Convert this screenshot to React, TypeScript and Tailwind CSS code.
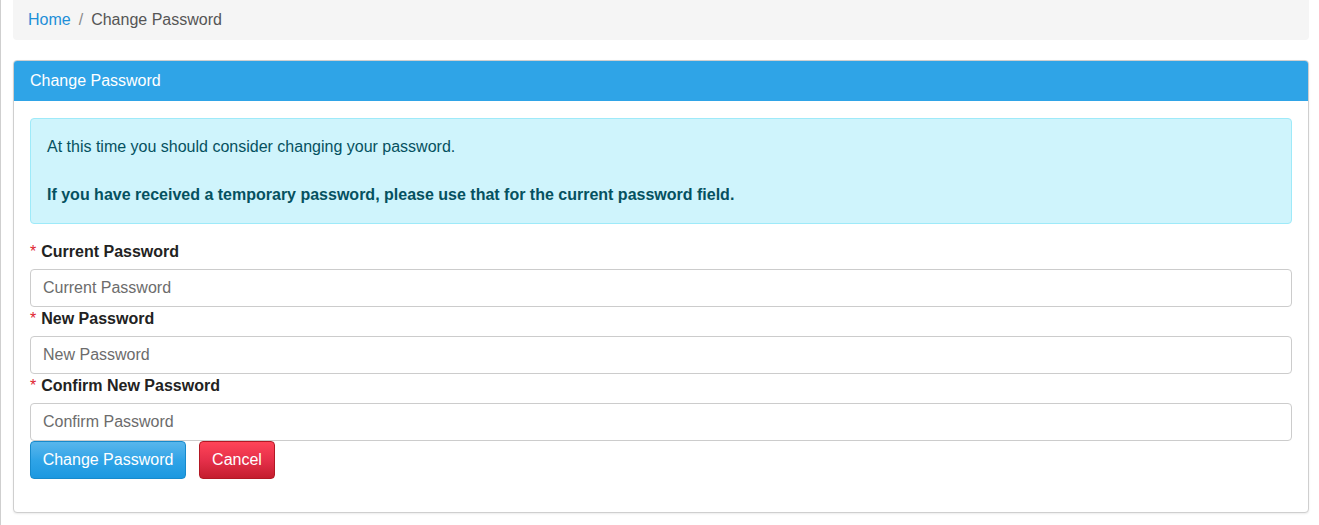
import { useState } from "react";

type Field = {
  name: string;
  label: string;
  placeholder: string;
};

const fields: Field[] = [
  { name: "currentPassword", label: "Current Password", placeholder: "Current Password" },
  { name: "newPassword", label: "New Password", placeholder: "New Password" },
  { name: "confirmPassword", label: "Confirm New Password", placeholder: "Confirm Password" },
];

export default function App() {
  const [values, setValues] = useState<Record<string, string>>({});

  function onFieldChange(name: string, value: string) {
    setValues((prev) => ({ ...prev, [name]: value }));
  }

  return (
    <div className="min-h-[525px] border-l border-[#cfcfcf] bg-white pr-[10px] pl-[12px] font-['Liberation_Sans',Arial,sans-serif] text-base text-[#555]">
      <ol className="flex h-10 items-center rounded-b-[4px] bg-[#f5f5f5] px-[15px] leading-6">
        <li>
          <a href="#" className="text-[#1d8fd8]">
            Home
          </a>
        </li>
        <li className="px-2 text-[#8a8a8a]">/</li>
        <li className="text-[#555]">Change Password</li>
      </ol>

      <div className="mt-5 rounded-[4px] border border-[#cfcfcf] bg-white shadow-[0_1px_2px_rgba(0,0,0,0.08)]">
        <div className="flex h-10 items-center rounded-t-[3px] bg-[#2fa4e7] px-4 text-white">Change Password</div>

        <div className="px-4 pt-[17px] pb-[17px]">
          <div className="mb-4 rounded-[4px] border border-[#9eeaf9] bg-[#cff4fc] p-4 leading-6 text-[#055160]">
            <p className="mb-6">At this time you should consider changing your password.</p>
            <p className="font-bold">If you have received a temporary password, please use that for the current password field.</p>
          </div>

          <form className="mb-4" onSubmit={(event) => event.preventDefault()}>
            {fields.map((field) => (
              <div key={field.name}>
                <label htmlFor={field.name} className="mb-[5px] block leading-6 font-bold text-[#222]">
                  <span className="mr-[5px] font-normal text-[#e0262f]">*</span>
                  {field.label}
                </label>
                <input
                  id={field.name}
                  type="password"
                  value={values[field.name] ?? ""}
                  onChange={(event) => onFieldChange(field.name, event.target.value)}
                  placeholder={field.placeholder}
                  className="block h-[38px] w-full rounded-[4px] border border-[#cccccc] bg-white px-3 text-base text-[#555] placeholder:text-[#6c6c6c] focus:outline-none"
                />
              </div>
            ))}

            <div className="flex gap-[13px]">
              <button
                type="submit"
                className="h-[38px] w-[156px] rounded-[4px] border border-[#178acc] bg-gradient-to-b from-[#58b6ec] via-[#2fa4e7] to-[#1b98e0] text-base text-white"
              >
                Change Password
              </button>
              <button
                type="button"
                className="h-[38px] w-[76px] rounded-[4px] border border-[#b21824] bg-gradient-to-b from-[#ff4458] via-[#e6304a] to-[#c41d2e] text-base text-white"
              >
                Cancel
              </button>
            </div>
          </form>
        </div>
      </div>
    </div>
  );
}
